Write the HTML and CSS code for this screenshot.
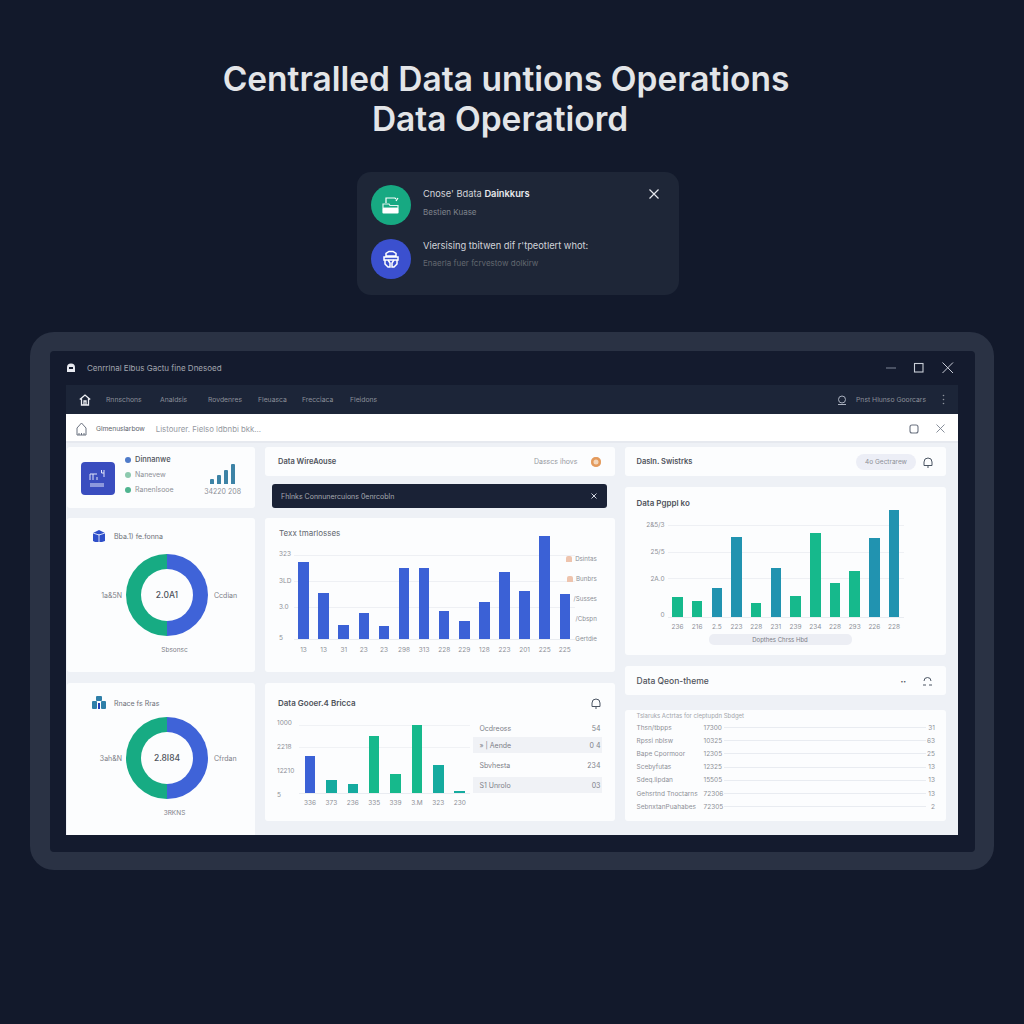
FILE: index.html
```html
<!DOCTYPE html>
<html lang="en">
<head>
<meta charset="UTF-8" />
<meta name="viewport" content="width=device-width, initial-scale=1" />
<title>Centralled Data Operations</title>
<link rel="stylesheet" href="styles.css">
</head>
<body>

<!-- Heading -->
<h1 class="pageTitle">Centralled Data untions Operations<br><span class="titleSecond">Data Operatiord</span></h1>

<!-- Notice popup -->
<div class="notice">
  <div class="noticeRow">
    <span class="noticeIcon green">
      <svg width="22" height="22" viewBox="0 0 22 22" fill="none" stroke="#fff" stroke-width="1.200"><path d="M6 9V4h9l1 1M18 4l-2 3"/><path d="M3 10h6l1 1.500h8V14H3z" stroke-opacity=".85"/><rect x="3" y="14.500" width="15" height="4.500" rx=".5" fill="#fff"/></svg>
    </span>
    <div class="noticeText">
      <div class="noticeHead">Cnose' Bdata <b>Dainkkurs</b></div>
      <div class="noticeSub">Bestien Kuase</div>
    </div>
    <svg class="noticeClose" width="12" height="12" viewBox="0 0 12 12" stroke="#e6e8ee" stroke-width="1.200"><path d="M1.500 1.500l9 9M10.500 1.500l-9 9"/></svg>
  </div>
  <div class="noticeRow second">
    <span class="noticeIcon blue">
      <svg width="20" height="20" viewBox="0 0 20 20" fill="none" stroke="#fff" stroke-width="1.500"><path d="M5 7V4.500L8 2.500h4l3 2V7zM3 8h14v3H3z"/><path d="M4 11v4l3 3h2v-4L7 11M16 11v4l-3 3h-2v-4l2-3"/></svg>
    </span>
    <div class="noticeText">
      <div class="noticeHead">Viersising tbitwen dif r'tpeotlert whot:</div>
      <div class="noticeSub dim">Enaerla fuer fcrvestow dolkirw</div>
    </div>
  </div>
</div>

<!-- Device frame -->
<div class="frame">
  <div class="window">

    <div class="titleBar">
      <svg width="10" height="10" viewBox="0 0 10 10"><path d="M1 9V4.500a4 4 0 0 1 8 0V9z" fill="#e8eaf0"/><rect x="3" y="4" width="4" height="2" fill="#141b2e"/></svg>
      <span class="titleText">Cenrrlnal Elbus Gactu fine Dnesoed</span>
      <div class="winControls">
        <svg width="12" height="12" viewBox="0 0 12 12" stroke="#7f8797" stroke-width="1"><path d="M2 6h10"/></svg>
        <svg width="12" height="12" viewBox="0 0 12 12" fill="none" stroke="#c9ced8" stroke-width="1.100"><rect x="1.500" y="1.500" width="8.500" height="8.500"/></svg>
        <svg width="12" height="12" viewBox="0 0 12 12" stroke="#c9ced8" stroke-width="1"><path d="M.5.500l10.500 10.500M11 .5L.5 11"/></svg>
      </div>
    </div>

    <div class="navBar">
      <svg class="navHome" width="12" height="12" viewBox="0 0 12 12" fill="none" stroke="#eef0f5" stroke-width="1.300"><path d="M.8 5.500L6 1l5.200 4.500M2.500 4.500V11h7V4.500M5 11V7h2v4"/></svg>
      <span class="navItem w1">Rnnschons</span>
      <span class="navItem w2">Analdsis</span>
      <span class="navItem w3">Rovdenres</span>
      <span class="navItem w4">Fleuasca</span>
      <span class="navItem w5">Frecciaca</span>
      <span class="navItem">Fleidons</span>
      <div class="navRight">
        <svg width="10" height="10" viewBox="0 0 10 10" fill="none" stroke="#aab1bf" stroke-width="1"><circle cx="5" cy="4.500" r="3.500"/><path d="M1 9.500h8"/></svg>
        <span class="navItem">Pnst Hlunso Goorcars</span>
        <svg class="navDots" width="3" height="11" viewBox="0 0 3 11" fill="#8d929c"><circle cx="1.500" cy="1.500" r=".8"/><circle cx="1.500" cy="5.500" r=".8"/><circle cx="1.500" cy="9.500" r=".8"/></svg>
      </div>
    </div>

    <div class="toolBar">
      <svg width="11" height="14" viewBox="0 0 11 14" fill="none" stroke="#6b7280" stroke-width="1"><path d="M1 13V6l4.500-5L10 6v7zM3 13v-2M5.500 13v-2M8 13v-2"/></svg>
      <span class="toolName">Glmenuslarbow</span>
      <span class="toolHint">Listourer. Fielso ldbnbi bkk...</span>
      <div class="toolRight">
        <svg width="10" height="10" viewBox="0 0 10 10" fill="none" stroke="#6b7280" stroke-width="1.100"><rect x="1" y="1" width="8" height="8" rx="2"/></svg>
        <svg width="9" height="9" viewBox="0 0 9 9" stroke="#7b8290" stroke-width=".9"><path d="M.5.500l8 8M8.500.500l-8 8"/></svg>
      </div>
    </div>

    <div class="content">

      <!-- Left column -->
      <div class="col">
        <div class="card summary">
          <div class="sumLogo">
            <svg width="20" height="19" viewBox="0 0 20 19" fill="none" stroke="#dfe4fa" stroke-width="1"><path d="M2 11V5h7M5 5v6M9 8v3M16 1v7M13.500 1v3h2.500M2 15h14M2 17h14"/></svg>
          </div>
          <div class="sumList">
            <div class="sumHead"><i class="dot blueDot"></i>Dinnanwe</div>
            <div class="sumItem"><i class="dot greenDot"></i>Nanevew</div>
            <div class="sumItem"><i class="dot tealDot"></i>Ranenlsooe</div>
          </div>
          <div class="sumStat">
            <div class="miniBars">
              <span style="height:5px"></span>
              <span style="height:9px"></span>
              <span style="height:14px"></span>
              <span style="height:20px"></span>
            </div>
            <div class="sumValue">34220 208</div>
          </div>
        </div>

        <div class="card donutCard first">
          <div class="donutTitle">
            <svg width="14" height="14" viewBox="0 0 14 14"><path d="M1 4l6-3 6 3v8l-3 1H3l-2-1z" fill="#2f4fc9"/><path d="M7 5v8M1 4l6 2 6-2" stroke="#fff" stroke-width=".8" fill="none"/></svg>
            <span>Bba.1) fe.fonna</span>
          </div>
          <div class="donutRow">
            <span class="donutLeft">1a&amp;5N</span>
            <div class="donut"><span>2.0A1</span></div>
            <span class="donutRight">Ccdian</span>
          </div>
          <div class="donutBottom">Sbsonsc</div>
        </div>

        <div class="card donutCard last">
          <div class="donutTitle">
            <svg width="14" height="14" viewBox="0 0 14 14" fill="#2f7fa8"><rect x="4" y="0" width="6" height="5" rx="1"/><rect x="0" y="5" width="5" height="8" rx="1"/><rect x="9" y="5" width="5" height="8" rx="1"/><rect x="6" y="7" width="2" height="6" fill="#2340b8"/></svg>
            <span>Rnace fs Rras</span>
          </div>
          <div class="donutRow">
            <span class="donutLeft">3ah&amp;N</span>
            <div class="donut"><span>2.8I84</span></div>
            <span class="donutRight">Cfrdan</span>
          </div>
          <div class="donutBottom">3RKNS</div>
        </div>
      </div>

      <!-- Middle column -->
      <div class="col">
        <div class="card headCard">
          <span class="headTitle">Data WireAouse</span>
          <span class="headNote">Dasscs ihovs</span>
          <i class="orangeDot"></i>
        </div>
        <div class="darkBar">
          <span>Fhlnks Connunercuions 0enrcobln</span>
          <svg width="6" height="6" viewBox="0 0 6 6" stroke="#cfd4de" stroke-width="1"><path d="M.5.500l5 5M5.500.500l-5 5"/></svg>
        </div>

        <div class="card chartCard main">
          <div class="chartTitle">Texx tmarlosses</div>
          <div class="chartBody">
            <div class="yAxis">
              <span>323</span><span>3LD</span><span>3.0</span><span>5</span>
            </div>
            <div class="plotWrap">
              <div class="plot">
                <i class="bar blue" style="height:77px"></i>
                <i class="bar blue" style="height:46px"></i>
                <i class="bar blue" style="height:14px"></i>
                <i class="bar blue" style="height:26px"></i>
                <i class="bar blue" style="height:13px"></i>
                <i class="bar blue" style="height:71px"></i>
                <i class="bar blue" style="height:71px"></i>
                <i class="bar blue" style="height:28px"></i>
                <i class="bar blue" style="height:18px"></i>
                <i class="bar blue" style="height:37px"></i>
                <i class="bar blue" style="height:67px"></i>
                <i class="bar blue" style="height:48px"></i>
                <i class="bar blue" style="height:103px"></i>
                <i class="bar blue" style="height:45px"></i>
              </div>
              <div class="xAxis">
                <span>13</span><span>13</span><span>31</span><span>23</span><span>23</span><span>298</span><span>313</span><span>228</span><span>229</span><span>128</span><span>223</span><span>201</span><span>225</span><span>225</span>
              </div>
            </div>
            <div class="legend">
              <span><i class="legIcon"></i>Dsintas</span>
              <span><i class="legIcon"></i>Bunbrs</span>
              <span>/Susses</span>
              <span>/Cbspn</span>
              <span>Gertdie</span>
            </div>
          </div>
        </div>

        <div class="card chartCard gov">
          <div class="govHead">
            <span class="chartTitle strong">Data Gooer.4 Bricca</span>
            <svg width="10" height="12" viewBox="0 0 10 12" fill="none" stroke="#4b5563" stroke-width="1"><path d="M1 9.500V6a4 4 0 0 1 8 0v3.500zM4 11h2"/></svg>
          </div>
          <div class="chartBody">
            <div class="yAxis">
              <span>1000</span><span>2218</span><span>12210</span><span>5</span>
            </div>
            <div class="plotWrap">
              <div class="plot">
                <i class="bar blue" style="height:37px"></i>
                <i class="bar teal" style="height:13px"></i>
                <i class="bar teal" style="height:9px"></i>
                <i class="bar green" style="height:57px"></i>
                <i class="bar green" style="height:19px"></i>
                <i class="bar green" style="height:68px"></i>
                <i class="bar teal" style="height:28px"></i>
                <i class="bar teal" style="height:2px"></i>
              </div>
              <div class="xAxis">
                <span>336</span><span>373</span><span>236</span><span>335</span><span>339</span><span>3.M</span><span>323</span><span>230</span>
              </div>
            </div>
            <div class="sideTable">
              <div class="sideRow"><span>Ocdreoss</span><span>54</span></div>
              <div class="sideRow alt"><span>» | Aende</span><span>0 4</span></div>
              <div class="sideRow"><span>Sbvhesta</span><span>234</span></div>
              <div class="sideRow alt"><span>S1 Unrolo</span><span>03</span></div>
            </div>
          </div>
        </div>
      </div>

      <!-- Right column -->
      <div class="col">
        <div class="card headCard right">
          <span class="headTitle">Dasln. Swistrks</span>
          <span class="pill">4o Gectrarew</span>
          <svg width="10" height="12" viewBox="0 0 10 12" fill="none" stroke="#4b5563" stroke-width="1"><path d="M1 9.500V6a4 4 0 0 1 8 0v3.500zM4 11h2"/></svg>
        </div>

        <div class="card chartCard pipe">
          <div class="chartTitle strong">Data Pgppl ko</div>
          <div class="chartBody">
            <div class="yAxis">
              <span>2&amp;5/3</span><span>25/5</span><span>2A.0</span><span>0</span>
            </div>
            <div class="plotWrap">
              <div class="plot">
                <i class="bar green" style="height:20px"></i>
                <i class="bar green" style="height:16px"></i>
                <i class="bar sea" style="height:29px"></i>
                <i class="bar sea" style="height:80px"></i>
                <i class="bar green" style="height:14px"></i>
                <i class="bar sea" style="height:49px"></i>
                <i class="bar green" style="height:21px"></i>
                <i class="bar green" style="height:84px"></i>
                <i class="bar green" style="height:34px"></i>
                <i class="bar green" style="height:46px"></i>
                <i class="bar sea" style="height:79px"></i>
                <i class="bar sea" style="height:107px"></i>
              </div>
              <div class="xAxis">
                <span>236</span><span>216</span><span>2.5</span><span>223</span><span>228</span><span>231</span><span>239</span><span>234</span><span>228</span><span>293</span><span>226</span><span>228</span>
              </div>
            </div>
          </div>
          <div class="pipePill">Dopthes Chrss Hbd</div>
        </div>

        <div class="card headCard right lower">
          <span class="headTitle big">Data Qeon-theme</span>
          <span class="headMark">••</span>
          <svg width="11" height="12" viewBox="0 0 11 12" fill="none" stroke="#4b5563" stroke-width="1"><path d="M2 6a3.500 3.500 0 0 1 7 0M1 10h3M7 10h3"/></svg>
        </div>

        <div class="card listCard">
          <div class="listCaption">Tslaruks Actrtas for cleptupdn Sbdget</div>
          <div class="listRow"><span>Thsn/tbpps</span><span>17300</span><i></i><span>31</span></div>
          <div class="listRow"><span>Rpssi nblsw</span><span>10325</span><i></i><span>63</span></div>
          <div class="listRow"><span>Bape Cpormoor</span><span>12305</span><i></i><span>25</span></div>
          <div class="listRow"><span>Scebyfutas</span><span>12325</span><i></i><span>13</span></div>
          <div class="listRow"><span>Sdeq.lipdan</span><span>15505</span><i></i><span>13</span></div>
          <div class="listRow"><span>Gehsrtnd Tnoctarns</span><span>72306</span><i></i><span>13</span></div>
          <div class="listRow"><span>SebnxtanPuahabes</span><span>72305</span><i></i><span>2</span></div>
        </div>
      </div>

    </div>
  </div>
</div>

</body>
</html>
```

FILE: styles.css
```css
body {
  margin: 0;
  background: #12192b;
  color: #4f535b;
  font-family: Inter, "Liberation Sans", sans-serif;
  overflow-x: hidden;
}
svg { display: block; flex: none; }
i { display: block; font-style: normal; }

/* Heading */
.pageTitle {
  margin: 0;
  padding: 59px 12px 0 0;
  font-size: 33.500px;
  font-weight: 600;
  line-height: 40px;
  text-align: center;
  color: #e3e5e8;
  white-space: nowrap;
}
.titleSecond { position: relative; left: -6px; }

/* Notice popup */
.notice {
  margin: 33px 0 0 357px;
  width: 322px;
  height: 123px;
  box-sizing: border-box;
  padding: 13px 19px 0 14px;
  background: #1e2637;
  border-radius: 14px;
}
.noticeRow { display: flex; align-items: flex-start; height: 40px; }
.noticeRow.second { margin-top: 14px; }
.noticeIcon {
  width: 40px;
  height: 40px;
  border-radius: 50%;
  display: flex;
  align-items: center;
  justify-content: center;
  flex: none;
}
.noticeIcon.green { background: #17a982; }
.noticeIcon.blue { background: #3b50cf; }
.noticeText { margin-left: 12px; flex: 1; }
.noticeHead { font-size: 9.300px; line-height: 12px; margin-top: 3px; color: #d2d4d9; }
.noticeHead b { font-weight: 600; color: #e8e9ec; }
.noticeRow.second .noticeHead { margin-top: 1px; }
.noticeSub { font-size: 8px; line-height: 10px; margin-top: 7px; color: #7f838c; }
.noticeRow.second .noticeSub { margin-top: 6px; }
.noticeSub.dim { color: #62666f; }
.noticeClose { margin-top: 3px; }

/* Device frame */
.frame {
  margin: 37px 0 0 30px;
  width: 964px;
  height: 538px;
  box-sizing: border-box;
  padding: 19px 19px 18px 20px;
  background: #2a3244;
  border-radius: 24px;
}
.window {
  height: 501px;
  box-sizing: border-box;
  padding: 0 17px 17px 16px;
  background: #141b2e;
  border-radius: 4px;
  display: flex;
  flex-direction: column;
}
.titleBar { height: 34px; flex: none; display: flex; align-items: center; }
.titleText { margin-left: 11px; font-size: 8px; color: #a2a6af; }
.winControls { margin-left: auto; margin-right: 4px; display: flex; gap: 17px; }

.navBar {
  height: 29px;
  flex: none;
  display: flex;
  align-items: center;
  padding: 0 13px;
  background: #1c2538;
}
.navHome { margin-right: 15px; }
.navItem { font-size: 6.800px; color: #8b8f98; white-space: nowrap; }
.w1 { width: 54px; }
.w2 { width: 48px; }
.w3 { width: 50px; }
.w4 { width: 44px; }
.w5 { width: 48px; }
.navRight { margin-left: auto; display: flex; align-items: center; gap: 9px; }
.navDots { margin-left: 7px; }

.toolBar {
  height: 29px;
  flex: none;
  display: flex;
  align-items: center;
  padding: 0 13px 0 10px;
  background: #fff;
  box-shadow: inset 0 -2px 0 #e6e9ef;
  color: #7d8088;
}
.toolName { margin-left: 9px; font-size: 6.800px; letter-spacing: -.1px; color: #63676f; }
.toolHint { margin-left: 11px; font-size: 7.800px; color: #96999f; }
.toolRight { margin-left: auto; display: flex; align-items: center; gap: 17px; }

.content {
  flex: 1;
  min-height: 0;
  overflow: hidden;
  box-sizing: border-box;
  padding: 4px 0 0 1px;
  background: #eef1f6;
  display: grid;
  grid-template-columns: 188px 349.500px 321.500px;
  column-gap: 10px;
}
.col { display: flex; flex-direction: column; min-width: 0; }
.card { background: #fcfdfe; border-radius: 3px; flex: none; box-sizing: border-box; }

/* Summary card */
.summary { height: 61px; display: flex; padding: 0 14px; }
.sumLogo {
  width: 34px;
  height: 33px;
  margin-top: 15px;
  background: #3a4dbf;
  border-radius: 4px;
  display: flex;
  align-items: center;
  justify-content: center;
}
.sumList { margin-left: 10px; padding-top: 7px; }
.sumHead { display: flex; align-items: center; font-size: 7.500px; line-height: 12px; color: #4f535b; font-weight: 500; }
.sumItem { display: flex; align-items: center; font-size: 7px; line-height: 12px; margin-top: 3px; color: #8d9097; }
.dot { width: 6px; height: 6px; border-radius: 50%; margin-right: 4px; }
.blueDot { background: #4f7bc9; }
.greenDot { background: #8cc9ae; }
.tealDot { background: #4fb48f; }
.sumStat { margin-left: auto; margin-right: 0; text-align: center; }
.miniBars { display: flex; align-items: flex-end; justify-content: center; gap: 3px; height: 37px; }
.miniBars span { width: 4px; background: #3d83a6; border-radius: 1px 1px 0 0; }
.sumValue { margin-top: 3px; font-size: 7px; line-height: 9px; color: #8d9097; }

/* Donut cards */
.donutCard { margin-top: 10px; height: 154px; padding-top: 11px; }
.donutCard.last { margin-top: 11px; height: 152px; padding-top: 13px; border-radius: 3px 3px 0 0; }
.donutTitle {
  display: flex;
  align-items: center;
  height: 14px;
  padding-left: 25px;
  gap: 8px;
  font-size: 7px;
  color: #6d7078;
}
.donutRow { display: flex; align-items: center; margin-top: 11px; font-size: 7px; color: #7d8088; }
.donutCard.last .donutRow { margin-top: 7px; }
.donutLeft { width: 55px; text-align: right; }
.donutRight { margin-left: 6px; }
.donut {
  width: 82px;
  height: 82px;
  margin-left: 4px;
  border-radius: 50%;
  background: conic-gradient(#3f63d8 0 50%, #17ab83 50% 100%);
  display: flex;
  align-items: center;
  justify-content: center;
  flex: none;
}
.donut span {
  width: 52px;
  height: 52px;
  line-height: 52px;
  border-radius: 50%;
  background: #fcfdfe;
  text-align: center;
  font-size: 8.500px;
  font-weight: 500;
  color: #4f535b;
}
.donutBottom { margin: 9px 0 0 27px; text-align: center; font-size: 6.500px; line-height: 10px; color: #7d8088; }

/* Column header cards */
.headCard { height: 29px; display: flex; align-items: center; padding: 0 14px 0 13px; }
.headCard.right { padding: 0 13px 0 12px; }
.headCard.lower { margin-top: 11px; }
.headTitle { font-size: 7.500px; font-weight: 600; color: #4f535b; margin-right: auto; }
.headTitle.big { font-size: 8.500px; font-weight: 500; }
.headNote { font-size: 7px; color: #96999f; }
.orangeDot {
  width: 10px;
  height: 10px;
  margin-left: 13px;
  border-radius: 50%;
  background: #e9a368;
  box-shadow: inset 0 0 0 2.500px #e39a5c, inset 0 0 0 5px #f3d6bb;
}
.pill {
  width: 60px;
  height: 16px;
  line-height: 16px;
  text-align: center;
  border-radius: 8px;
  background: #eceef6;
  font-size: 6.500px;
  color: #8d9097;
  margin-right: 7px;
}
.headMark { font-size: 5px; color: #4f535b; margin-right: 16px; }

.darkBar {
  flex: none;
  height: 24px;
  margin: 8px 8px 0 7px;
  padding: 0 10px 0 9px;
  display: flex;
  align-items: center;
  justify-content: space-between;
  background: #1a2236;
  border-radius: 3px;
  font-size: 7px;
  color: #a6a9b0;
}

/* Bar charts */
.chartCard { padding: 9px 12px 0 14px; }
.chartCard.main { margin-top: 10px; height: 154px; }
.chartCard.gov { margin-top: 11px; height: 138px; padding: 0 12px 0 12px; }
.chartCard.pipe { margin-top: 11px; height: 168px; padding: 10px 0 0 12px; }
.chartTitle { font-size: 8px; line-height: 12px; color: #63676f; }
.chartTitle.strong { font-weight: 600; color: #4f535b; }
.chartBody { display: flex; align-items: flex-start; }
.yAxis {
  flex: none;
  display: flex;
  flex-direction: column;
  box-sizing: border-box;
  font-size: 6.500px;
  line-height: 10px;
  color: #8d9097;
}
.yAxis span:last-child { margin-top: auto; }
.plot {
  display: grid;
  align-items: end;
  justify-items: center;
  border-bottom: 1px solid #e9ecf1;
  background-repeat: no-repeat;
}
.xAxis { display: grid; justify-items: center; font-size: 6.500px; line-height: 10px; color: #8d9097; }
.bar { width: 10.500px; }
.bar.blue { background: #3b61d6; }
.bar.green { background: #16b98c; }
.bar.teal { background: #15ab9f; }
.bar.sea { background: #2193b0; }

.main .chartBody { margin-top: -3px; }
.main .yAxis { width: 14.500px; height: 107px; padding-top: 13px; gap: 16.500px; }
.main .plot {
  grid-template-columns: repeat(14, 20.100px);
  height: 103px;
  background-image: linear-gradient(#eef0f4, #eef0f4), linear-gradient(#eef0f4, #eef0f4), linear-gradient(#eef0f4, #eef0f4);
  background-size: 100% 1px;
  background-position: 0 19px, 0 45px, 0 71px;
}
.main .xAxis { grid-template-columns: repeat(14, 20.100px); margin-top: 5px; }
.legend {
  margin: 18px 0 0 -9px;
  height: 90px;
  display: flex;
  flex-direction: column;
  justify-content: space-between;
  align-items: flex-end;
  flex: none;
  width: 31px;
  font-size: 6.200px;
  line-height: 10px;
  color: #8d9097;
  position: relative;
}
.legend span { display: flex; align-items: center; white-space: nowrap; }
.legIcon { width: 6px; height: 6px; margin-right: 3px; border-radius: 2px 2px 0 0; background: #eec4ae; }

.govHead { display: flex; justify-content: space-between; align-items: center; padding: 14px 2px 0 1px; height: 12px; margin-bottom: 14px; }
.gov .yAxis { width: 22.300px; height: 79px; margin-top: -5px; gap: 14px; }
.gov .plot {
  grid-template-columns: repeat(8, 21.400px);
  height: 70px;
  background-image: linear-gradient(#f0f2f5, #f0f2f5), linear-gradient(#f0f2f5, #f0f2f5);
  background-size: 100% 1px;
  background-position: 0 2px, 0 24px;
}
.gov .xAxis { grid-template-columns: repeat(8, 21.400px); margin-top: 4px; }
.sideTable {
  margin: -3px 0 0 3px;
  width: 129px;
  flex: none;
  display: grid;
  grid-template-rows: 17px 16px 24px 16px;
  font-size: 7px;
  color: #7d8088;
}
.sideRow { display: flex; align-items: center; justify-content: space-between; padding: 0 2px 0 6px; }
.sideRow.alt { background: #f0f2f6; }

.pipe .chartBody { margin-top: 1px; }
.pipe .yAxis { width: 31.150px; padding-right: 3px; height: 110px; padding-top: 10px; gap: 17px; text-align: right; }
.pipe .plot {
  grid-template-columns: repeat(12, 19.700px);
  height: 107px;
  background-image: linear-gradient(#eef0f4, #eef0f4), linear-gradient(#eef0f4, #eef0f4), linear-gradient(#eef0f4, #eef0f4);
  background-size: 100% 1px;
  background-position: 0 15px, 0 42px, 0 68px;
}
.pipe .xAxis { grid-template-columns: repeat(12, 19.700px); margin-top: 4px; }
.pipePill {
  margin: 2px 0 0 72px;
  width: 143px;
  height: 11px;
  line-height: 11px;
  text-align: center;
  background: #eceef4;
  border-radius: 5px;
  font-size: 6px;
  color: #7d8088;
}

/* Right lower list */
.listCard { margin-top: 15px; height: 111px; padding: 0 11px 0 12px; }
.listCaption { height: 11px; line-height: 11px; font-size: 6px; color: #a2a5ab; }
.listRow {
  display: flex;
  align-items: center;
  height: 13.200px;
  font-size: 6.500px;
  color: #8d9097;
}
.listRow span:first-child { width: 67px; white-space: nowrap; }
.listRow span:nth-child(2) { width: 20px; }
.listRow i { flex: 1; height: 1px; background: #e9ecf1; }
.listRow span:last-child { width: 9px; text-align: right; }
```
